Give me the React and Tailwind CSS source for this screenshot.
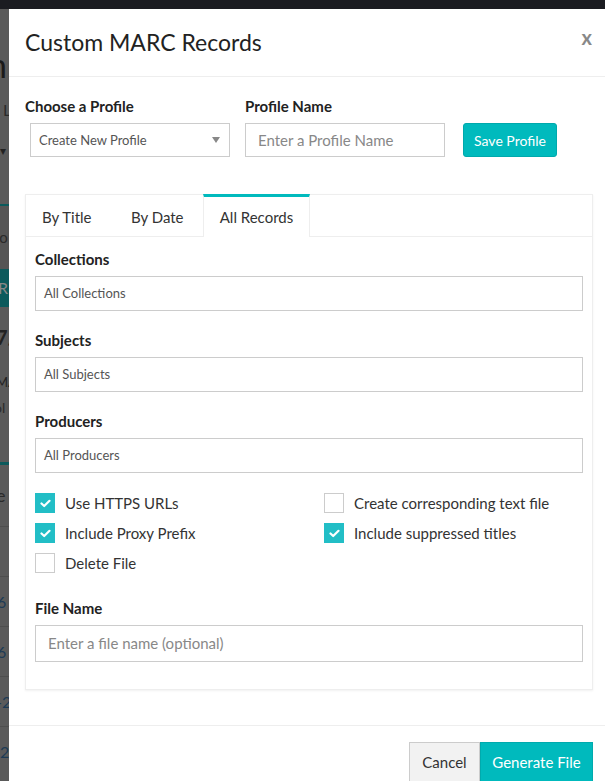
import React from "react";

const font = { fontFamily: "Lato, 'Liberation Sans', sans-serif" };

function Check({ checked, label }) {
  return (
    <label className="flex items-center h-[20px] gap-[10px] text-[15px] text-[#333]">
      {checked ? (
        <span className="w-[20px] h-[20px] bg-[#22bec6] flex items-center justify-center shrink-0">
          <svg width="11" height="9" viewBox="0 0 11 9">
            <path d="M1.5 4.5 L4.2 7 L9.5 1.8" stroke="#fff" strokeWidth="2.2" fill="none" strokeLinecap="round" strokeLinejoin="round" />
          </svg>
        </span>
      ) : (
        <span className="w-[20px] h-[20px] border border-[#ccc] bg-white shrink-0" />
      )}
      <span>{label}</span>
    </label>
  );
}

function Field({ label, value }) {
  return (
    <div className="flex flex-col">
      <div className="text-[15px] font-bold text-[#222] leading-[18px] h-[18px]">{label}</div>
      <div className="mt-[8px] h-[35px] border border-[#ccc] flex items-center px-[8px] text-[13px] text-[#555]">{value}</div>
    </div>
  );
}

export default function App() {
  return (
    <div className="relative w-[605px] h-[781px] overflow-hidden bg-[#5a5a5a]" style={font}>
      {/* dimmed background page */}
      <div className="flex flex-col text-[#2a2a2a]">
        <div className="h-[9px] bg-[#1b1c21]" />
        <div className="h-[85px] flex items-end"><span className="text-[34px] leading-[34px] ml-[-12px] text-[#1a1a1a] mb-[12px]">n</span></div>
        <div className="h-[32px] flex items-center text-[16px] pl-[3px]">L</div>
        <div className="h-[78px] pt-[16px] text-[12px] text-[#222]">▾</div>
        <div className="h-[2px] bg-[#0b5a5c]" />
        <div className="h-[63px] bg-[#555] flex items-center text-[15px] ml-[-6px]">to</div>
        <div className="h-[38px] bg-[#0c5a5c] flex items-center text-[16px] text-[#888] ml-[-2px]">R</div>
        <div className="h-[45px] flex items-end text-[20px] font-bold text-[#222] ml-[-4px]">7/</div>
        <div className="h-[40px] flex items-end text-[13px] text-[#222] ml-[-4px]">MA</div>
        <div className="h-[30px] flex items-center text-[14px] ml-[-6px]">ol</div>
        <div className="h-[40px]" />
        <div className="h-[3px] bg-[#0c5a5c]" />
        <div className="h-[62px] flex items-center text-[18px] ml-[-4px] border-b border-[#4e4e4e]">e</div>
        <div className="h-[50px] border-b border-[#4e4e4e]" />
        <div className="h-[50px] flex items-center text-[16px] text-[#1d3a55] ml-[-3px] border-b border-[#4e4e4e]">6</div>
        <div className="h-[50px] flex items-center text-[16px] text-[#1d3a55] ml-[-3px] border-b border-[#4e4e4e]">6</div>
        <div className="h-[50px] flex items-center text-[16px] text-[#1d3a55] ml-[-4px] border-b border-[#4e4e4e]">-2</div>
        <div className="h-[50px] flex items-center text-[16px] text-[#1d3a55]">2</div>
      </div>

      {/* modal */}
      <div className="absolute left-[9px] top-[9px] w-[600px] h-[800px] bg-white flex flex-col">
        <div className="h-[68px] border-b border-[#eee] flex items-center justify-between px-[16px]">
          <h4 className="text-[23px] text-[#222] leading-none">Custom MARC Records</h4>
          <span className="text-[20px] font-bold text-[#888] mr-[1px] mt-[-12px]">x</span>
        </div>

        <div className="px-[16px] pt-[20px]">
          <div className="flex items-end">
            <div className="flex flex-col">
              <div className="text-[15px] font-bold text-[#222] leading-[18px]">Choose a Profile</div>
              <div className="mt-[8px] ml-[5px] w-[200px] h-[34px] border border-[#ccc] flex items-center justify-between px-[8px] text-[13px] text-[#555]">
                <span className="mt-[2px]">Create New Profile</span>
                <svg width="8" height="6" viewBox="0 0 8 6" className="mr-[1px]"><path d="M0 0 H8 L4 6 Z" fill="#888" /></svg>
              </div>
            </div>
            <div className="flex flex-col ml-[15px]">
              <div className="text-[15px] font-bold text-[#222] leading-[18px]">Profile Name</div>
              <div className="mt-[8px] w-[200px] h-[34px] border border-[#ccc] flex items-center px-[12px] text-[15px] text-[#888]">Enter a Profile Name</div>
            </div>
            <button className="ml-[18px] h-[34px] w-[94px] rounded-[3px] bg-[#00babd] border border-[#00a9ac] text-white text-[14px]">Save Profile</button>
          </div>

          <div className="mt-[37px] border border-[#eee] shadow-[0_1px_2px_rgba(0,0,0,0.06)]">
            <div className="flex h-[42px] border-b border-[#eee] text-[15px] text-[#333]">
              <div className="w-[88px] pl-[16px] pt-[3px] flex items-center">By Title</div>
              <div className="w-[89px] pl-[17px] pt-[3px] flex items-center">By Date</div>
              <div className="w-[107px] border-t-[3px] border-t-[#00babd] border-x border-x-[#eee] bg-white mt-[-1px] mb-[-1px] flex items-center justify-center">All Records</div>
            </div>
            <div className="px-[9px] pt-[13px] pb-[27px] flex flex-col gap-[20px]">
              <Field label="Collections" value="All Collections" />
              <Field label="Subjects" value="All Subjects" />
              <Field label="Producers" value="All Producers" />
              <div className="grid grid-cols-[289px_1fr] gap-y-[10px]">
                <Check checked label="Use HTTPS URLs" />
                <Check label="Create corresponding text file" />
                <Check checked label="Include Proxy Prefix" />
                <Check checked label="Include suppressed titles" />
                <Check label="Delete File" />
              </div>
              <div className="flex flex-col mt-[6px]">
                <div className="text-[15px] font-bold text-[#222] leading-[18px]">File Name</div>
                <div className="mt-[8px] h-[37px] border border-[#ccc] flex items-center px-[12px] text-[15px] text-[#888]">Enter a file name (optional)</div>
              </div>
            </div>
          </div>
        </div>

        <div className="mt-[35px] border-t border-[#eee] pt-[16px] px-[16px] flex justify-end">
          <button className="h-[40px] w-[71px] bg-[#f2f2f2] border border-[#ccc] text-[15px] text-[#333]">Cancel</button>
          <button className="h-[40px] w-[113px] bg-[#00babd] border border-[#00aaad] text-[15px] text-white">Generate File</button>
        </div>
      </div>
    </div>
  );
}
